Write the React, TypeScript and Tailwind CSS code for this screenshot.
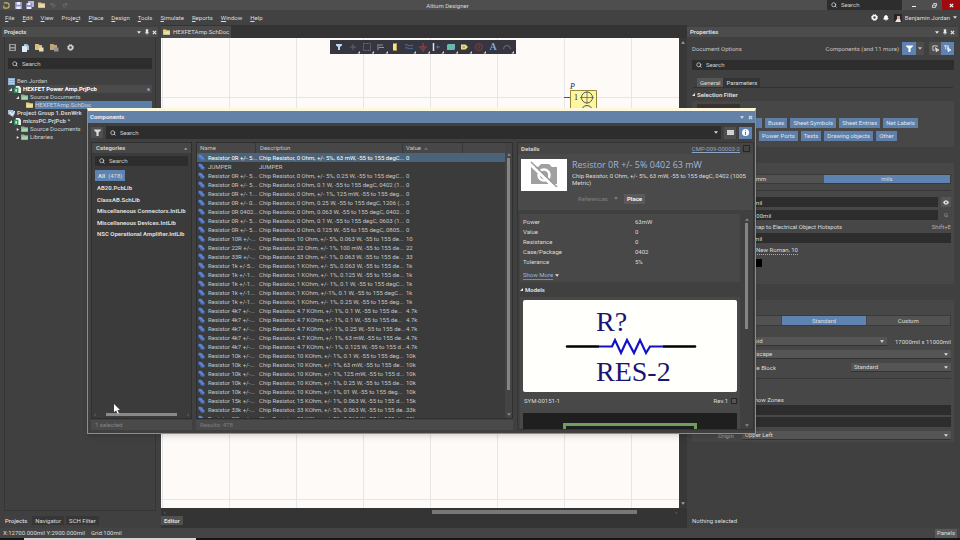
import { useState } from "react";
import type { ReactNode } from "react";
import { Search, Bell, Undo2, Redo2 } from "lucide-react";

const chip = (rest: string) => `Chip Resistor, ${rest}`;

const parts = [
  ["Resistor 0R +/- 5...", chip("0 Ohm, +/- 5%, 63 mW, -55 to 155 degC..."), "0"],
  ["JUMPER", "JUMPER", ""],
  ["Resistor 0R +/- 5...", chip("0 Ohm, +/- 5%, 0.25 W, -55 to 155 degC..."), "0"],
  ["Resistor 0R +/- 5...", chip("0 Ohm, 0.1 W, -55 to 155 degC, 0402 (1..."), "0"],
  ["Resistor 0R +/- 1...", chip("0 Ohm, +/- 1%, 125 mW, -55 to 155 deg..."), "0"],
  ["Resistor 0R +/- 0...", chip("0 Ohm, 0.25 W, -55 to 155 degC, 1206 (..."), "0"],
  ["Resistor 0R 0402...", chip("0 Ohm, 0.063 W, -55 to 155 degC, 0402..."), "0"],
  ["Resistor 0R +/- 5...", chip("0 Ohm, 0.1 W, -55 to 155 degC, 0603 (1..."), "0"],
  ["Resistor 0R +/- 5...", chip("0 Ohm, 0.125 W, -55 to 155 degC, 0805..."), "0"],
  ["Resistor 10R +/-...", chip("10 Ohm, +/- 5%, 0.063 W, -55 to 155 de..."), "10"],
  ["Resistor 22R +/-...", chip("22 Ohm, +/- 1%, 100 mW, -55 to 155 de..."), "22"],
  ["Resistor 33R +/-...", chip("33 Ohm, +/- 1%, 0.063 W, -55 to 155 de..."), "33"],
  ["Resistor 1k +/-5...", chip("1 KOhm, +/- 5%, 0.063 W, -55 to 155 de..."), "1k"],
  ["Resistor 1k +/-1...", chip("1 KOhm, +/- 1%, 0.125 W, -55 to 155 de..."), "1k"],
  ["Resistor 1k +/-1...", chip("1 KOhm, +/- 1%, 0.1 W, -55 to 155 degC..."), "1k"],
  ["Resistor 1k +/-1...", chip("1 KOhm, +/-1%, 0.1 W, -55 to 155 degC..."), "1k"],
  ["Resistor 1k +/-1...", chip("1 KOhm, +/- 1%, 0.25 W, -55 to 155 deg..."), "1k"],
  ["Resistor 4k7 +/-...", chip("4.7 KOhm, +/- 1%, 0.1 W, -55 to 155 de..."), "4.7k"],
  ["Resistor 4k7 +/-...", chip("4.7 KOhm, +/- 1%, 0.1 W, -55 to 155 de..."), "4.7k"],
  ["Resistor 4k7 +/-...", chip("4.7 KOhm, +/- 1%, 0.25 W, -55 to 155 de..."), "4.7k"],
  ["Resistor 4k7 +/-...", chip("4.7 KOhm, +/- 1%, 63 mW, -55 to 155 de..."), "4.7k"],
  ["Resistor 4k7 +/-...", chip("4.7 KOhm, +/- 1%, 0.125 W, -55 to 155 d..."), "4.7k"],
  ["Resistor 10k +/-...", chip("10 KOhm, +/- 1%, 0.1 W, -55 to 155 deg..."), "10k"],
  ["Resistor 10k +/-...", chip("10 KOhm, +/- 1%, 63 mW, -55 to 155 de..."), "10k"],
  ["Resistor 10k +/-...", chip("10 KOhm, +/- 1%, 125 mW, -55 to 155 d..."), "10k"],
  ["Resistor 10k +/-...", chip("10 KOhm, +/- 1%, 0.25 W, -55 to 155 de..."), "10k"],
  ["Resistor 10k +/-...", chip("10 KOhm, +/- 1%, 01 W, -55 to 155 deg..."), "10k"],
  ["Resistor 15k +/-...", chip("15 KOhm, +/- 1%, 0.063 W, -55 to 155 d..."), "15k"],
  ["Resistor 33k +/-...", chip("33 KOhm, +/- 5%, 0.063 W, -55 to 155 de..."), "33k"],
  ["Resistor 33k +/-...", chip("33 KOhm, +/- 5%, 0.063 W, -55 to 155 de..."), "33k"],
];

const menus: [string, number][] = [
  ["File", 0],
  ["Edit", 0],
  ["View", 0],
  ["Project", 5],
  ["Place", 0],
  ["Design", 0],
  ["Tools", 0],
  ["Simulate", 0],
  ["Reports", 0],
  ["Window", 0],
  ["Help", 0],
];

const categories = [
  "AB20.PcbLib",
  "ClassAB.SchLib",
  "Miscellaneous Connectors.IntLib",
  "Miscellaneous Devices.IntLib",
  "NSC Operational Amplifier.IntLib",
];

const params = [
  ["Power", "63mW"],
  ["Value", "0"],
  ["Resistance", "0"],
  ["Case/Package", "0402"],
  ["Tolerance", "5%"],
];

function Caret({ className = "" }: { className?: string }) {
  return (
    <svg viewBox="0 0 6 4" className={`h-[3px] w-[4px] shrink-0 fill-current ${className}`}>
      <path d="M0 0h6L3 4z" />
    </svg>
  );
}

function Cross() {
  return (
    <svg viewBox="0 0 6 6" className="size-[5px] stroke-current">
      <path d="M1 1l4 4M5 1L1 5" strokeWidth="1.4" />
    </svg>
  );
}

function Gear({ className = "" }: { className?: string }) {
  return (
    <svg viewBox="0 0 8 8" className={`size-[7px] shrink-0 fill-none stroke-current ${className}`}>
      <circle cx="4" cy="4" r="2.3" strokeWidth="1.8" />
      <circle cx="4" cy="4" r="3.4" strokeWidth="1" strokeDasharray="1.5 1.17" />
    </svg>
  );
}

function Funnel() {
  return (
    <svg viewBox="0 0 8 8" className="size-[7px] fill-current">
      <path d="M0 0.5h8v1L5.2 4v4H2.8V4L0 1.5z" />
    </svg>
  );
}

function PanelButtons() {
  return (
    <div className="flex items-center gap-[3px] text-gray-200">
      <button aria-label="Panel menu" className="flex w-[5px] justify-center">
        <Caret />
      </button>
      <button aria-label="Pin" className="flex w-[5px] justify-center">
        <svg viewBox="0 0 5 7" className="h-[6px] w-[4px] fill-current">
          <path d="M1 0h3v4H1zM0 4h5v1H0zM2 5h1v2H2z" />
        </svg>
      </button>
      <button aria-label="Close" className="flex w-[5px] justify-center">
        <Cross />
      </button>
    </div>
  );
}

function SearchBox({ label, className = "" }: { label: string; className?: string }) {
  return (
    <label className={`flex items-center gap-1 bg-[#2d2d2d] px-1 ${className}`}>
      <Search className="size-[6px] shrink-0 text-gray-300" strokeWidth={3} />
      <input
        aria-label={label}
        placeholder="Search"
        className="w-full min-w-0 bg-transparent outline-none placeholder:text-[#d0d0d0]"
      />
    </label>
  );
}

function Folder({ fill }: { fill: string }) {
  return (
    <svg viewBox="0 0 8 6" className="h-[6px] w-[7px] shrink-0" fill={fill}>
      <path d="M0 0h3.5l1 1H8v5H0z" />
      <path d="M1.5 2.5h6.5L7.5 6H0.5z" fill="#fff" opacity="0.35" />
    </svg>
  );
}

// folder overlaid with a small badge, used by the project toolbar
function ProjectFolder({ fill, badge }: { fill: string; badge: string }) {
  return (
    <svg viewBox="0 0 9 8" className="h-[8px] w-[9px] shrink-0" fill={fill}>
      <path d="M0 0h3.5l1 1H7v5H0z" />
      <path d="M4 3.5h4.5V7.5H4z" fill={badge} />
    </svg>
  );
}

function Twisty({ open }: { open: boolean }) {
  return (
    <svg viewBox="0 0 4 4" className="size-[3px] shrink-0 fill-gray-200">
      <path d={open ? "M4 0v4H0z" : "M1 0l3 2-3 2z"} />
    </svg>
  );
}

function BoardIcon() {
  return (
    <svg viewBox="0 0 8 8" className="size-[7px] shrink-0">
      <path d="M2 0h4l2 2v6H2z" fill="#e8efe9" />
      <path d="M0 2h5v6H0z" fill="#2f8f63" />
      <path d="M1.5 3.5h2v3h-2z" fill="#bfe5cf" />
    </svg>
  );
}

function PartIcon() {
  return (
    <svg viewBox="0 0 8 8" className="size-[7px]">
      <path d="M0.5 1.5L2 0.5l3 1 0.5 1.5 2 1.5v2.5L6 7.8 3 7 2.5 5 0.5 4z" fill="#4a74c2" />
      <path d="M1 1.8l3 1v1.5l2.5 1" stroke="#86a5dc" strokeWidth="0.7" fill="none" />
    </svg>
  );
}

function TitleBar() {
  return (
    <header className="flex h-[10px] shrink-0 items-center bg-[#4e4e4e]">
      <div className="flex flex-1 items-center gap-[4px] pl-[3px]">
        <svg viewBox="0 0 8 8" className="size-[7px]" fill="none" stroke="#c9b46a" strokeWidth="1.3">
          <path d="M1 1h3a3 3 0 010 6H1M1 4v3" />
        </svg>
        <svg viewBox="0 0 8 8" className="ml-px size-[7px]">
          <path d="M0 0h8v8H0z" fill="#8f93c9" />
          <path d="M2 0h4v3H2zM1.5 5h5v3h-5z" fill="#eef" />
        </svg>
        <svg viewBox="0 0 8 8" className="size-[8px]">
          <path d="M2 0h6v6H2z" fill="#b4b7dd" />
          <path d="M0 2h6v6H0z" fill="#8f93c9" />
          <path d="M1.5 2h3v2h-3zM1 6h4v2H1z" fill="#eef" />
        </svg>
        <Folder fill="#dcc88a" />
        <Undo2 className="ml-px size-[6px] text-[#777]" strokeWidth={3} />
        <Redo2 className="ml-[2px] size-[6px] text-[#777]" strokeWidth={3} />
      </div>
      <h1 className="pr-[68px] pt-[2px] text-[#d8d8d8]">Altium Designer</h1>
      <div className="flex flex-1 items-center justify-end">
        <SearchBox label="Search commands" className="h-[10px] w-[75px]" />
        <button aria-label="Minimize" className="flex h-[10px] w-[24px] items-end justify-center pb-[3px]">
          <span className="h-px w-[4px] bg-gray-100" />
        </button>
        <button aria-label="Restore" className="flex h-[10px] w-[16px] items-center justify-center">
          <svg viewBox="0 0 6 6" className="size-[5px]" stroke="#eee" fill="none">
            <path d="M2 1.5V0.5h3.5v3h-1M0.5 2.5h3.5v3H0.5z" />
          </svg>
        </button>
        <button aria-label="Close" className="flex h-[10px] w-[18px] items-center justify-center bg-[#a00a0f] text-white">
          <Cross />
        </button>
      </div>
    </header>
  );
}

function MenuBar() {
  return (
    <nav className="flex h-[15px] shrink-0 items-center justify-between bg-[#424242] pl-[5px] pr-[3px]">
      <ul className="flex gap-[8px]">
        {menus.map(([name, hot]) => (
          <li key={name}>
            <button>
              {name.slice(0, hot)}
              <u>{name[hot]}</u>
              {name.slice(hot + 1)}
            </button>
          </li>
        ))}
      </ul>
      <div className="flex items-center gap-[5px]">
        <Gear className="text-white" />
        <Bell className="size-[6px] fill-white text-white" strokeWidth={3} />
        <button className="flex items-center gap-[3px]">
          <svg viewBox="0 0 8 8" className="size-[8px]">
            <path d="M0 0h8v8H0z" fill="#2a2424" />
            <path d="M3 2h3v3H3z" fill="#d7a893" />
            <path d="M1 8l2-3h3l1 3z" fill="#e5e5ea" />
          </svg>
          Benjamin Jordan
          <Caret />
        </button>
      </div>
    </nav>
  );
}

function ProjectsPanel() {
  return (
    <aside className="flex w-[161px] shrink-0 flex-col bg-[#404040] pl-[2px] pr-[3px]">
      <div className="mt-[2px] flex h-[10px] items-center justify-between bg-[#4c4c4c] pl-[2px] pr-[1px]">
        <h2 className="font-bold">Projects</h2>
        <PanelButtons />
      </div>
      <div className="mx-[2px] flex flex-1 flex-col border border-t-0 border-[#353535]">
        <div className="flex h-[21px] items-center gap-[6px] pl-[4px]">
          <svg viewBox="0 0 7 7" className="size-[7px]" fill="#9a9a9a">
            <path d="M0 0h7v7H0z" />
            <path d="M1.5 1h4v2h-4zM1.5 4.5h4v1.5h-4z" fill="#444" />
          </svg>
          <svg viewBox="0 0 7 8" className="h-[8px] w-[7px]">
            <path d="M2 0h3l2 2v4H2z" fill="#9ec1e2" />
            <path d="M0 2h4l1 1v5H0z" fill="#dcecfa" />
          </svg>
          <ProjectFolder fill="#d9bd82" badge="#e9dcb8" />
          <ProjectFolder fill="#bda577" badge="#9a948a" />
          <Gear className="ml-[2px] text-gray-300" />
        </div>
        <SearchBox label="Search projects" className="mx-[3px] h-[11px]" />
        <ul className="mx-[3px] mt-[8px] leading-[8px] text-[#cfcfcf]">
          <li className="flex h-[8px] items-center gap-[2px]">
            <svg viewBox="0 0 7 7" className="size-[7px]" fill="#8fb0cf">
              <path d="M0 0h7v7H0z" />
              <path d="M1 1.5h5M1 3.5h5M1 5.5h5" stroke="#dfeaf5" strokeWidth="0.5" />
            </svg>
            Ben Jordan
          </li>
          <li className="flex h-[8px] items-center gap-[2px] bg-[#4b4b4b] pl-[1px] font-bold text-white">
            <Twisty open />
            <BoardIcon />
            <span>HEXFET Power Amp.PrjPcb</span>
            <span className="ml-auto mr-[2px] size-[3px] rounded-full bg-[#8796bd]" />
          </li>
          <li className="flex h-[8px] items-center gap-[2px] pl-[8px]">
            <Twisty open />
            <Folder fill="#7cb98b" />
            Source Documents
          </li>
          <li className="flex h-[8px] items-center gap-[2px] pl-[18px]">
            <Folder fill="#e0cf74" />
            <span className="flex-1 bg-[#5c7fa9]">HEXFETAmp.SchDoc</span>
          </li>
          <li className="flex h-[8px] items-center gap-[2px] font-bold">
            <svg viewBox="0 0 7 7" className="size-[7px]">
              <path d="M0 0h5l2 3-2 4-5-3z" fill="#a8bfdb" />
              <path d="M2 2l2 3 3-4" stroke="#fff" fill="none" />
            </svg>
            Project Group 1.DsnWrk
          </li>
          <li className="flex h-[8px] items-center gap-[2px] pl-[1px] font-bold">
            <Twisty open />
            <BoardIcon />
            microPC.PrjPcb *
          </li>
          <li className="flex h-[8px] items-center gap-[2px] pl-[8px]">
            <Twisty open={false} />
            <Folder fill="#7cb98b" />
            Source Documents
          </li>
          <li className="flex h-[8px] items-center gap-[2px] pl-[8px]">
            <Twisty open={false} />
            <Folder fill="#7cb98b" />
            Libraries
          </li>
        </ul>
      </div>
      <div className="flex h-[17px] items-center gap-[2px] pt-[2px]">
        <button className="h-[9px] px-[3px] font-medium">Projects</button>
        <button className="h-[9px] bg-[#363636] px-[3px]">Navigator</button>
        <button className="h-[9px] bg-[#363636] px-[3px]">SCH Filter</button>
      </div>
    </aside>
  );
}

function Tool({ children, menu = true }: { children: ReactNode; menu?: boolean }) {
  return (
    <button className="flex h-[14px] w-[14px] items-center justify-center">
      <svg viewBox="0 0 14 14" className="size-[14px]" fill="none">
        {children}
        {menu && <path d="M14 11v2.5h-2.5z" fill="#ddd" />}
      </svg>
    </button>
  );
}

function ActiveBar() {
  return (
    <div className="absolute left-[169px] top-[2px] flex h-[14px] bg-[#35363f] pl-[2px] pr-[2px]">
      <Tool menu={false}>
        <path d="M4 4h6v1.5L8 7v3H6V7L4 5.5z" fill="#bcd4ee" />
      </Tool>
      <Tool>
        <path d="M4 7h6M7 4v6" stroke="#62626c" />
      </Tool>
      <Tool>
        <path d="M3.5 3.5h7v7h-7z" stroke="#6b6b74" strokeDasharray="2 1" />
      </Tool>
      <Tool>
        <path d="M4 4v6M5 5h4M5 7.5h5" stroke="#909a90" />
      </Tool>
      <Tool menu={false}>
        <path d="M5 3.5h4v7H5z" fill="#f3e48a" />
        <path d="M8 3.5h1v7H8z" fill="#c9a94f" />
      </Tool>
      <Tool>
        <path d="M3 5c3-1 4 2 8 0M3 8c3-1 4 2 8 0" stroke="#4c7ab0" />
      </Tool>
      <Tool>
        <path d="M7 3v4M3 7h8M4.5 9h5M6 11h2" stroke="#a8424a" />
      </Tool>
      <Tool>
        <path d="M3.5 3v8" stroke="#d8e6f5" strokeWidth="1.5" />
        <path d="M6 7h4M7.5 5.5v3" stroke="#4d79b4" />
      </Tool>
      <Tool>
        <path d="M3 5l1-1h7v5l-1 1H3z" fill="#66b9ac" />
      </Tool>
      <Tool>
        <path d="M3 4.5h4.5L10 7 7.5 9.5H3z" fill="#f0dd72" />
        <path d="M4.5 7H7" stroke="#777" />
      </Tool>
      <Tool>
        <circle cx="7" cy="7" r="3.5" stroke="#8f3640" />
        <path d="M7 5v3.5" stroke="#8f3640" />
      </Tool>
      <button className="h-[14px] w-[14px] font-['Liberation_Serif',serif] text-[10px] font-bold leading-[14px] text-[#76aade]">
        A
      </button>
      <Tool>
        <path d="M3.5 9a3.5 3.5 0 017 0" stroke="#70707c" />
      </Tool>
    </div>
  );
}

function Editor() {
  return (
    <main className="flex min-w-0 flex-1 flex-col bg-[#343434]">
      <div className="flex h-[13px] items-end">
        <button className="flex h-[12px] items-center gap-[3px] bg-[#4a4a4a] px-[2px]">
          <Folder fill="#e0cf74" />
          HEXFETAmp.SchDoc
        </button>
      </div>
      <div className="flex min-h-0 flex-1">
        <div className="relative flex-1 bg-[#fefaf7]">
          <svg className="absolute inset-0 size-full">
            <defs>
              <pattern id="grid" x="1" y="59" width="67" height="67" patternUnits="userSpaceOnUse">
                <path d="M0.5 0v67M0 0.5h67" stroke="#e6e6e6" fill="none" />
              </pattern>
            </defs>
            <rect width="100%" height="100%" fill="url(#grid)" />
            <path d="M403 59.5h6" stroke="#555" />
            <path d="M409.5 52.5h26v30h-26z" fill="#fdf6a0" stroke="#98893a" />
            <circle cx="426" cy="59.5" r="5.5" stroke="#555" fill="none" />
            <path d="M419 59.5h14M426 53v13" stroke="#555" strokeWidth="0.7" />
            <circle cx="426" cy="73" r="5.5" stroke="#555" fill="none" />
            <text x="413" y="62" fontSize="8" fill="#222" fontFamily="Liberation Serif">1</text>
            <text x="409" y="51" fontSize="8" fill="#223" fontStyle="italic" fontFamily="Liberation Serif">P</text>
          </svg>
          <ActiveBar />
        </div>
        <div className="flex w-[8px] flex-col items-center justify-between bg-[#383838] py-[3px] text-gray-400">
          <Caret className="rotate-180" />
          <Caret />
        </div>
      </div>
      <div className="flex h-[8px] items-center justify-between pl-[3px] pr-[10px] text-[#888]">
        <span>‹</span>
        <span className="ml-auto mr-[38px] h-[4px] w-2/5 bg-[#777]" />
        <span>›</span>
      </div>
      <div className="h-[12px]">
        <button className="h-[9px] bg-[#505050] px-[3px] font-bold">Editor</button>
      </div>
    </main>
  );
}

function Chip({ children, className = "" }: { children: ReactNode; className?: string }) {
  return <button className={`h-[10px] shrink-0 bg-[#5f7fa9] px-[3px] text-[#dde6f2] ${className}`}>{children}</button>;
}

function Picker({ label, value, className = "" }: { label: string; value: string; className?: string }) {
  return (
    <div className={`relative h-[9px] ${className}`}>
      <select
        aria-label={label}
        className="block h-[9px] w-full appearance-none border-b border-[#333] bg-[#555] pl-[3px] leading-[8px] outline-none"
      >
        <option>{value}</option>
      </select>
      <Caret className="absolute right-[3px] top-[3px]" />
    </div>
  );
}

function Field({ label, value = "" }: { label: string; value?: string }) {
  return <input aria-label={label} defaultValue={value} className="h-[10px] min-w-0 flex-1 bg-[#2d2d2d] px-[2px] outline-none" />;
}

function PropertiesPanel() {
  return (
    <aside className="flex w-[273px] shrink-0 flex-col bg-[#404040] pr-[2px]">
      <div className="mt-[2px] flex h-[10px] items-center justify-between bg-[#4c4c4c] pl-[3px] pr-[3px]">
        <h2 className="font-bold">Properties</h2>
        <PanelButtons />
      </div>
      <div className="flex h-[23px] items-center pl-[5px] pr-[4px] text-[#c4c4c4]">
        <span className="flex-1">Document Options</span>
        <span className="pr-[3px]">Components (and 11 more)</span>
        <button aria-label="Filter" className="flex h-[13px] w-[14px] items-center justify-center bg-[#5f83b1] text-white">
          <Funnel />
        </button>
        <button aria-label="Filter menu" className="flex h-[13px] w-[8px] items-center justify-center bg-[#4c4c4c]">
          <Caret />
        </button>
        <button aria-label="Select all" className="ml-[5px] flex h-[13px] w-[12px] items-center justify-center bg-[#4f4f4f]">
          <svg viewBox="0 0 8 8" className="size-[7px]" fill="none" stroke="#ddd">
            <path d="M6 2V1H1v5h2" />
            <path d="M4 3l4 3-2 0-1 2z" fill="#ddd" />
          </svg>
        </button>
        <button aria-label="Select filtered" className="flex h-[13px] w-[13px] items-center justify-center bg-[#5f83b1]">
          <svg viewBox="0 0 8 8" className="size-[7px]" fill="none" stroke="#eef">
            <path d="M0 1h5v3M2 1v4" />
            <path d="M4 3l4 3-2 0-1 2z" fill="#eef" />
          </svg>
        </button>
      </div>
      <SearchBox label="Search properties" className="ml-[5px] mr-[4px] h-[10px]" />
      <div className="ml-[6px] mr-[5px] mt-[8px] flex h-[10px] border-b border-[#303030] pl-[4px]">
        <button className="h-[9px] bg-[#555] px-[3px]">General</button>
        <button className="h-[9px] bg-[#343434] px-[3px]">Parameters</button>
      </div>
      <h3 className="flex h-[13px] items-center gap-[2px] pl-[5px] font-bold">
        <Twisty open />
        Selection Filter
      </h3>
      <section className="ml-[5px] mr-[4px] h-[46px] bg-[#474747] pl-[5px] pt-[3px]">
        <button aria-label="Toggle all" className="block h-[10px] w-[43px] bg-[#383330]" />
        <div className="mt-[4px] flex gap-[3px]">
          <Chip className="w-[65px]">{""}</Chip>
          <Chip>Buses</Chip>
          <Chip>Sheet Symbols</Chip>
          <Chip>Sheet Entries</Chip>
          <Chip>Net Labels</Chip>
        </div>
        <div className="mt-[3px] flex gap-[3px]">
          <Chip className="w-[59px]">{""}</Chip>
          <Chip>Power Ports</Chip>
          <Chip>Texts</Chip>
          <Chip>Drawing objects</Chip>
          <Chip>Other</Chip>
        </div>
      </section>
      <section className="ml-[5px] mr-[4px] mt-[16px] h-[121px] bg-[#474747] pl-[5px] pr-[3px] pt-[11px]">
        <div className="flex h-[10px] border border-[#3a3a3a] leading-[8px]">
          <button className="flex-1 bg-[#525252]">mm</button>
          <button className="flex-1 bg-[#5f83b1]">mils</button>
        </div>
        <hr className="my-[6px] border-[#383838]" />
        <div className="flex items-center gap-[3px] pl-[45px]">
          <Field label="Visible grid" value="100mil" />
          <button aria-label="Toggle grid" className="flex h-[10px] w-[10px] items-center justify-center bg-[#555]">
            <svg viewBox="0 0 8 6" className="h-[5px] w-[6px]">
              <path d="M0 3q4-6 8 0-4 6-8 0z" fill="#e5e5e5" />
              <circle cx="4" cy="3" r="1.2" fill="#555" />
            </svg>
          </button>
        </div>
        <div className="mt-[3px] flex items-center gap-[3px] pl-[54px]">
          <Field label="Snap grid" value="100mil" />
          <span className="w-[10px] text-center text-[#999]">G</span>
        </div>
        <div className="flex h-[13px] items-center justify-between">
          <label className="flex items-center gap-[3px] pl-[45px]">
            <input type="checkbox" defaultChecked className="size-[6px] appearance-none bg-[#5f83b1]" />
            Snap to Electrical Object Hotspots
          </label>
          <span className="text-[#b0b0b0]">Shift+E</span>
        </div>
        <div className="flex pl-[45px]">
          <Field label="Snap distance" value="100mil" />
        </div>
        <p className="flex h-[14px] items-center pl-[41px]">
          <a href="#font" className="border-b border-dotted border-[#aaa]">
            Times New Roman, 10
          </a>
        </p>
        <div className="ml-[45px] mt-[2px] h-[8px] w-[20px] bg-black" />
      </section>
      <section className="ml-[5px] mr-[4px] mt-[16px] h-[142px] bg-[#474747] pl-[5px] pr-[3px] pt-[15px]">
        <div className="flex h-[11px] gap-px border border-[#3a3a3a]">
          <button className="flex-1 bg-[#525252]">Template</button>
          <button className="flex-1 bg-[#5f83b1]">Standard</button>
          <button className="flex-1 bg-[#525252]">Custom</button>
        </div>
        <div className="mt-[11px] flex items-center pl-[43px]">
          <Picker label="Sheet size" value="Tabloid" className="flex-1" />
          <span className="pl-[8px]">17000mil x 11000mil</span>
        </div>
        <Picker label="Orientation" value="Landscape" className="ml-[43px] mt-[4px]" />
        <div className="mt-[4px] flex items-center justify-between pl-[51px]">
          <span>Title Block</span>
          <Picker label="Title block" value="Standard" className="w-[100px]" />
        </div>
        <hr className="mt-[6px] border-[#383838]" />
        <label className="mt-[15px] flex h-[11px] items-center gap-[3px] pl-[45px]">
          <input type="checkbox" className="size-[6px] appearance-none border border-[#888]" />
          Show Zones
        </label>
        <div className="flex pl-[45px]">
          <Field label="Vertical zones" />
        </div>
        <div className="mt-[2px] flex pl-[45px]">
          <Field label="Horizontal zones" />
        </div>
        <div className="mt-[4px] flex items-center justify-end">
          <span className="flex-1 pl-[21px] text-[#a0a0a0]">Origin</span>
          <Picker label="Origin" value="Upper Left" className="w-[209px]" />
        </div>
      </section>
      <p className="mt-auto h-[11px] pl-[5px]">Nothing selected</p>
    </aside>
  );
}

function Categories() {
  return (
    <section className="flex w-[101px] shrink-0 flex-col">
      <div className="flex min-h-0 flex-1 flex-col border border-[#2f2f2f] bg-[#3b3b3b]">
        <h3 className="flex h-[10px] items-center justify-between bg-[#474747] px-[4px] font-bold text-[#d0d0d0]">
          Categories
          <span className="font-normal">«</span>
        </h3>
        <SearchBox label="Search categories" className="mx-[3px] mt-[3px] h-[10px]" />
        <button className="ml-[3px] mt-[4px] h-[11px] self-start bg-[#5f83b1] px-[3px]">
          <b>All</b> &nbsp;(478)
        </button>
        <ul className="mt-px pl-[5px] font-bold">
          {categories.map((name) => (
            <li key={name} className="flex h-[12px] items-center whitespace-nowrap even:h-[11px]">
              {name}
            </li>
          ))}
        </ul>
        <div className="mt-auto flex h-[8px] items-center justify-between px-[2px] text-[#888]">
          <span>‹</span>
          <span className="h-[3px] w-3/4 bg-[#8a8a8a]" />
          <span>›</span>
        </div>
      </div>
      <p className="mt-px h-[10px] bg-[#4a4a4a] pl-[4px] leading-[10px] text-[#858585]">1 selected</p>
    </section>
  );
}

function PartList() {
  const [selected, setSelected] = useState(0);

  return (
    <section className="flex min-w-0 flex-1 flex-col">
      <div className="flex min-h-0 flex-1 overflow-hidden border border-[#2f2f2f] bg-[#3b3b3b]">
        <table className="block flex-1 overflow-hidden whitespace-nowrap text-[#c6c6c6]">
          <thead className="flex h-[10px] items-center bg-[#474747] leading-[10px]">
            <tr className="flex w-full text-left">
              <th className="w-[59px] border-r border-[#383838] pl-[3px] font-normal">Name</th>
              <th className="w-[147px] border-r border-[#383838] pl-[4px] font-normal">Description</th>
              <th className="flex w-[60px] items-center gap-[3px] border-r border-[#383838] pl-[3px] font-normal">
                Value
                <Caret className="rotate-180 text-[#777]" />
              </th>
            </tr>
          </thead>
          <tbody className="block leading-[9px]">
            {parts.map(([name, text, value], i) => (
              <tr
                key={i}
                onClick={() => setSelected(i)}
                className={`flex h-[9px] ${i === selected ? "bg-[#4b6378] text-white" : ""}`}
              >
                <td className="w-[11px] pl-px pt-px">
                  <PartIcon />
                </td>
                <td className="w-[51px]">{name}</td>
                <td className="w-[147px]">{text}</td>
                <td>{value}</td>
              </tr>
            ))}
          </tbody>
        </table>
        <div className="flex w-[7px] flex-col items-center bg-[#444] pb-[2px] pt-[10px] text-[#888]">
          <Caret className="rotate-180" />
          <span className="mt-[2px] h-[232px] w-[3px] bg-[#858585]" />
          <Caret className="mt-auto" />
        </div>
      </div>
      <p className="mt-px h-[10px] bg-[#4a4a4a] pl-[4px] leading-[10px] text-[#7d7d7d]">Results: 478</p>
    </section>
  );
}

function Details() {
  return (
    <section className="flex w-[237px] shrink-0 flex-col overflow-hidden border border-[#333] bg-[#404040]">
      <div className="flex h-[11px] shrink-0 items-center bg-[#454545] pl-[3px] pr-[3px]">
        <h3 className="flex-1 font-bold text-[#d0d0d0]">Details</h3>
        <a href="#part" className="text-[#93a5c6] underline">
          CMP-009-00003-2
        </a>
        <span className="ml-[3px] size-[7px] border border-[#262626]" />
      </div>
      <div className="flex h-[56px] shrink-0 gap-[5px] bg-[#4a4a4a] pl-[3px] pt-[5px]">
        <div className="flex h-[32px] w-[46px] shrink-0 items-center justify-center bg-white">
          <svg viewBox="0 0 30 28" className="h-[28px] w-[30px]">
            <path d="M2 6h7l3-3h8l3 3h5v17H2z" fill="#a0a0a0" />
            <circle cx="15" cy="14" r="5.5" fill="none" stroke="#fff" strokeWidth="2.5" />
            <path d="M1 3l25 24" stroke="#fff" strokeWidth="3" />
            <path d="M2 1l26 25" stroke="#999" strokeWidth="1.5" />
          </svg>
        </div>
        <div className="min-w-0 flex-1">
          <h4 className="font-['Open_Sans',sans-serif] text-[9px] leading-[11px] text-[#9fb6dc]">
            Resistor 0R +/- 5% 0402 63 mW
          </h4>
          <p className="mt-[2px] leading-[7px]">
            Chip Resistor, 0 Ohm, +/- 5%, 63 mW, -55 to 155 degC, 0402 (1005
            <br />
            Metric)
          </p>
          <div className="mt-[7px] flex h-[11px] items-center gap-[6px] pl-[6px] text-[#808080]">
            <span>References</span>
            <Caret />
            <button className="h-[10px] bg-[#5a5a5a] px-[3px] font-bold text-gray-100">Place</button>
          </div>
        </div>
      </div>
      <div className="mt-[4px] flex min-h-0 flex-1">
        <div className="min-w-0 flex-1 overflow-hidden pl-[2px]">
          <div className="h-[68px] bg-[#484848] pl-[3px] pt-[3px]">
            <dl>
              {params.map(([name, value]) => (
                <div key={name} className="flex h-[10px] items-center">
                  <dt className="w-[112px]">{name}</dt>
                  <dd>{value}</dd>
                </div>
              ))}
            </dl>
            <button className="mt-[4px] flex items-center gap-[2px]">
              <span className="border-b border-[#5f8fcb] text-[#9fb6dc]">Show More</span>
              <Caret />
            </button>
          </div>
          <h4 className="flex h-[15px] items-center gap-[2px] font-bold">
            <Twisty open />
            Models
          </h4>
          <div className="bg-[#484848] px-[3px] pt-[3px]">
            <svg viewBox="0 0 214 92" className="block w-full rounded-[2px] bg-[#fffffb]">
              <text x="73" y="31" fontSize="28" fill="#1c1470" fontFamily="Liberation Serif">R?</text>
              <text x="73" y="81" fontSize="28" fill="#1c1470" fontFamily="Liberation Serif">RES-2</text>
              <path d="M44 46.5h128" stroke="#000" strokeWidth="2.5" strokeLinecap="round" />
              <path d="M76 46.5h64" stroke="#fffffb" strokeWidth="4" />
              <path
                d="M76 46.5h13l3-6.5 6 13 6-13 7 13 6-13 6 13 4-6.5h13"
                stroke="#1410c8"
                strokeWidth="2.2"
                fill="none"
              />
            </svg>
            <div className="flex h-[18px] items-center gap-[3px] pl-[1px]">
              <span className="flex-1">SYM-00151-1</span>
              <span>Rev.1</span>
              <span className="size-[6px] border border-[#262626] bg-[#555]" />
            </div>
            <div className="mt-[3px] h-[30px] bg-[#1f1f1f] px-[40px] pt-[10px]">
              <div className="h-[20px] border-[3px] border-[#6f9f5b]" />
            </div>
          </div>
        </div>
        <div className="flex w-[13px] flex-col items-center pb-[2px] pt-[4px] text-[#888]">
          <Caret className="rotate-180" />
          <span className="mt-[2px] h-[106px] w-[3px] bg-[#858585]" />
          <Caret className="mt-auto" />
        </div>
      </div>
    </section>
  );
}

function ComponentsWindow() {
  return (
    <div className="absolute bottom-[106px] left-[87px] right-[204px] top-[108px] flex flex-col border border-t-[3px] border-[#a08f50] border-t-[#fcf8df] bg-[#404040] shadow-md">
      <div className="flex h-[12px] shrink-0 items-center justify-between bg-[#6482a8] px-[2px]">
        <h2 className="font-bold text-[#e8eef5]">Components</h2>
        <div className="flex items-center gap-[4px]">
          <Caret />
          <button aria-label="Close components">
            <Cross />
          </button>
        </div>
      </div>
      <div className="mt-[3px] flex h-[13px] shrink-0 items-center gap-[3px] px-[3px]">
        <button aria-label="Filter components" className="flex h-[11px] w-[12px] items-center justify-center bg-[#505050]">
          <Funnel />
        </button>
        <div className="flex h-[13px] flex-1 items-center bg-[#2d2d2d] pr-[3px]">
          <SearchBox label="Search components" className="flex-1" />
          <Caret />
        </div>
        <button aria-label="List view" className="flex h-[12px] w-[12px] items-center justify-center bg-[#505050]">
          <svg viewBox="0 0 7 5" className="h-[5px] w-[7px]">
            <path d="M0 0h7v5H0z" fill="#d8d8d8" />
            <path d="M0 1.5h7M0 3.5h7" stroke="#bbb" strokeWidth="0.5" />
          </svg>
        </button>
        <button aria-label="Information" className="flex h-[12px] w-[13px] items-center justify-center bg-[#5f83b1]">
          <svg viewBox="0 0 8 8" className="size-[7px]">
            <circle cx="4" cy="4" r="4" fill="#fff" />
            <path d="M4 1.5v1.2M4 3.3v3.2" stroke="#4a72a5" strokeWidth="1.2" />
          </svg>
        </button>
      </div>
      <div className="mt-[3px] flex min-h-0 flex-1 gap-[4px] pb-[3px] pl-[3px] pr-px">
        <Categories />
        <PartList />
        <Details />
      </div>
      <svg viewBox="0 0 8 10" className="absolute bottom-[19px] left-[25px] h-[10px] w-[8px]">
        <path d="M1 0l6 6H4.5L6 9.5H4.5L3.2 6.5 1 8z" fill="#fff" />
      </svg>
    </div>
  );
}

export default function App() {
  return (
    <div className="relative flex h-screen flex-col overflow-hidden bg-[#3c3c3c] font-[Roboto,sans-serif] text-[6px] leading-[8px] text-[#dcdcdc]">
      <TitleBar />
      <MenuBar />
      <div className="flex min-h-0 flex-1">
        <ProjectsPanel />
        <Editor />
        <PropertiesPanel />
      </div>
      <footer className="flex h-[10px] shrink-0 items-center justify-between bg-[#444] pl-[3px] pr-[3px]">
        <p className="flex gap-[6px]">
          <span>X:12700.000mil Y:2900.000mil</span>
          <span>Grid:100mil</span>
        </p>
        <button className="h-[9px] bg-[#5a5a5a] px-[2px]">Panels</button>
      </footer>
      <div className="h-[2px] shrink-0 bg-[#151515] pl-[24px]">
        <div className="h-[2px] w-[172px] bg-[#d5d5d5]" />
      </div>
      <ComponentsWindow />
    </div>
  );
}
